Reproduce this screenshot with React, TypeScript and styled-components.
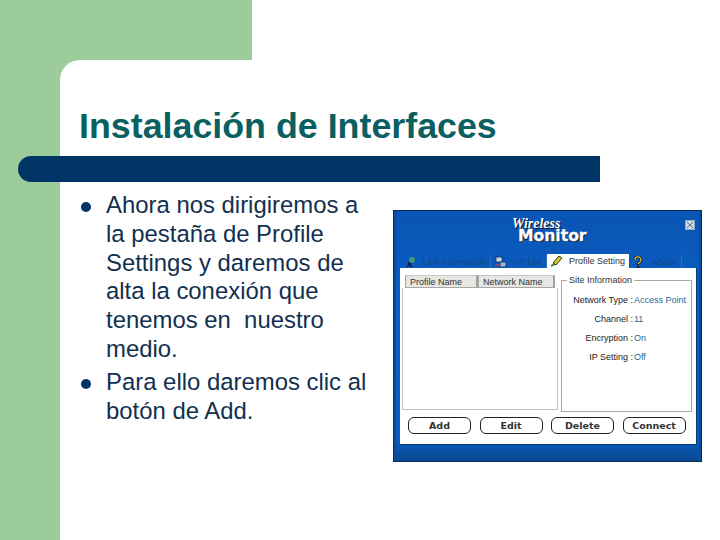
import React from "react";
import styled, { createGlobalStyle } from "styled-components";

const Global = createGlobalStyle`
  html, body { margin: 0; padding: 0; background: #fff; }
  #root { width: 720px; height: 540px; overflow: hidden; }
`;

const Slide = styled.div`
  width: 720px;
  height: 540px;
  display: flex;
  flex-direction: column;
  font-family: "Liberation Sans", Arial, sans-serif;
  background: #fff;
`;
const TopBand = styled.div`
  width: 252px;
  height: 60px;
  flex: none;
  background: #9dcc9b;
`;
const Lower = styled.div`
  flex: 1;
  background: linear-gradient(to right, #9dcc9b 252px, #fff 252px);
  display: flex;
  min-height: 0;
`;
const Content = styled.main`
  flex: 1;
  margin-left: 60px;
  background: #fff;
  border-top-left-radius: 20px;
  display: flex;
  flex-direction: column;
  min-width: 0;
`;
const Title = styled.h1`
  margin: 46px 0 0 19px;
  height: 40px;
  font-size: 35.8px;
  line-height: 40px;
  font-weight: 700;
  color: #0a6060;
  white-space: nowrap;
`;
const Rule = styled.div`
  width: 582px;
  height: 26px;
  margin: 10px 0 0 -42px;
  background: #003366;
  border-radius: 13px 0 0 13px;
`;
const Columns = styled.div`
  display: flex;
  align-items: flex-start;
`;
const Bullets = styled.ul`
  list-style: none;
  margin: 9px 0 0 19px;
  padding: 0;
  width: 295px;
  flex: none;
  display: flex;
  flex-direction: column;
  gap: 4px;
`;
const Bullet = styled.li`
  position: relative;
  padding-left: 27px;
  font-size: 23.9px;
  line-height: 28.8px;
  color: #12304f;
  &::before {
    content: "";
    position: absolute;
    left: 2px;
    top: 11px;
    width: 10px;
    height: 10px;
    border-radius: 50%;
    background: #003366;
  }
`;
const Win = styled.section`
  width: 309px;
  height: 252px;
  margin: 28px 0 0 19px;
  flex: none;
  box-sizing: border-box;
  border: 1px solid #0a2a58;
  background: linear-gradient(to bottom, #0a55b4 0, #0a5fc4 40%, #0b5cbc 92%, #0a4690 100%);
  box-shadow: inset 2px 0 0 #0a4c9c, inset -2px 0 0 #0a4c9c;
  padding: 2px 4px 0 6px;
  display: flex;
  flex-direction: column;
`;
const WinHead = styled.header`
  position: relative;
  height: 41px;
  flex: none;
  display: flex;
  flex-direction: column;
  color: #fff;
`;
const BrandTop = styled.div`
  font-family: "Liberation Serif", serif;
  font-style: italic;
  font-weight: 700;
  font-size: 14px;
  line-height: 12px;
  margin: 5px 0 0 112px;
  text-shadow: 1px 1px 0 #06122a;
`;
const BrandMain = styled.div`
  font-family: "DejaVu Sans", sans-serif;
  font-weight: 700;
  font-size: 15.6px;
  line-height: 13px;
  margin-left: 118px;
  -webkit-text-stroke: 0.3px #fff;
  text-shadow: 1px 1px 0 #06122a, 0 1px 0 #06122a;
`;
const Close = styled.div`
  position: absolute;
  right: 2px;
  top: 7px;
  width: 10px;
  height: 10px;
  box-sizing: border-box;
  background: #cfdbe6;
  border: 1px solid #8ea9c4;
  display: flex;
  align-items: center;
  justify-content: center;
`;
const TabRow = styled.nav`
  display: flex;
  align-items: flex-end;
  height: 14px;
  flex: none;
  padding-left: 1px;
`;
const Tab = styled.div<{ $active?: boolean; $w: number }>`
  width: ${(p) => p.$w}px;
  height: ${(p) => (p.$active ? 14 : 13)}px;
  box-sizing: border-box;
  flex: none;
  display: flex;
  align-items: center;
  gap: 6px;
  padding-left: 4px;
  font-size: 9px;
  white-space: nowrap;
  background: ${(p) => (p.$active ? "#fff" : "transparent")};
  color: ${(p) => (p.$active ? "#333" : "#124583")};
  border-right: ${(p) => (p.$active ? "none" : "1px solid #2f6cb8")};
`;
const Panel = styled.div`
  width: 297px;
  height: 177px;
  background: #fff;
  flex: none;
  box-sizing: border-box;
  border-right: 1px solid #0a3a78;
  border-bottom: 1px solid #0a3a78;
  padding: 0 4px 0 2px;
  display: flex;
  flex-direction: column;
`;
const PanelTop = styled.div`
  display: flex;
  height: 144px;
  box-sizing: border-box;
  padding-top: 7px;
  flex: none;
  gap: 3px;
`;
const ListBox = styled.div`
  width: 156px;
  flex: none;
  margin-bottom: 2px;
  display: flex;
  flex-direction: column;
`;
const ListHead = styled.div`
  display: flex;
  height: 13px;
  flex: none;
  margin: 0 3px;
`;
const Column = styled.div<{ $w: number }>`
  width: ${(p) => p.$w}px;
  box-sizing: border-box;
  flex: none;
  background: #e6e6e2;
  border-right: 2px solid #a0a0a0;
  border-left: 1px solid #a8a8a8;
  border-top: 1px solid #c8c8c8;
  border-bottom: 1px solid #a8a8a8;
  font-size: 9px;
  line-height: 12px;
  padding-left: 4px;
  color: #333;
  white-space: nowrap;
  overflow: hidden;
`;
const ListBody = styled.div`
  flex: 1;
  border: 1px solid #c0c0c0;
  border-top: none;
`;
const Group = styled.fieldset`
  width: 131px;
  flex: none;
  margin: 0;
  padding: 9px 0 0;
  min-width: 0;
  box-sizing: border-box;
  border: 1px solid #a8a8a8;
  display: flex;
  flex-direction: column;
  gap: 7px;
`;
const GroupTitle = styled.legend`
  font-size: 9px;
  line-height: 10px;
  margin-left: 5px;
  padding: 0 2px;
  color: #333;
`;
const Info = styled.div`
  display: grid;
  grid-template-columns: 71px 1fr;
  font-size: 9px;
  line-height: 12px;
  color: #222;
  white-space: nowrap;
`;
const InfoLabel = styled.span`
  text-align: right;
`;
const InfoValue = styled.span`
  color: #1d6a96;
  padding-left: 1px;
`;
const Buttons = styled.div`
  display: flex;
  gap: 8.5px;
  padding: 5px 0 0 6px;
`;
const Btn = styled.button`
  width: 63px;
  height: 17px;
  padding: 0;
  flex: none;
  background: #fff;
  border: 1px solid #222;
  border-radius: 6px;
  font-family: "DejaVu Sans", sans-serif;
  font-size: 9.5px;
  line-height: 15px;
  font-weight: 700;
  color: #333;
`;

const Tick = () => (
  <svg width="12" height="12" viewBox="0 0 12 12">
    <path d="M2 8 L8 1 L11 3 L5 10 Z" fill="#d8c020" stroke="#222" strokeWidth="0.9" />
    <path d="M0 11 L4 9" stroke="#2f7f2f" strokeWidth="1.6" />
  </svg>
);
const LinkIcon = () => (
  <svg width="12" height="12" viewBox="0 0 12 12">
    <circle cx="7" cy="4" r="3" fill="#3a9a7a" />
    <path d="M2 11 L6 7 M3 6 L7 11" stroke="#0c1c3a" strokeWidth="1.4" />
  </svg>
);
const ListIcon = () => (
  <svg width="12" height="12" viewBox="0 0 12 12">
    <rect x="1" y="1" width="6" height="5" fill="#c8d8e8" stroke="#12305a" strokeWidth="0.8" />
    <rect x="5" y="6" width="6" height="5" fill="#9ab4d8" stroke="#12305a" strokeWidth="0.8" />
    <path d="M1 9 H5" stroke="#d84030" strokeWidth="1.2" />
  </svg>
);
const HelpIcon = () => (
  <svg width="13" height="12" viewBox="0 0 13 12">
    <path d="M2 4 a3 3 0 1 1 4.5 2.4 L5 8 V9" fill="none" stroke="#1a1a1a" strokeWidth="2.6" />
    <path d="M2 4 a3 3 0 1 1 4.5 2.4 L5 8" fill="none" stroke="#e8d040" strokeWidth="1.1" />
    <rect x="4" y="10" width="2" height="2" fill="#1a1a1a" />
  </svg>
);
const CloseGlyph = () => (
  <svg width="8" height="8" viewBox="0 0 8 8">
    <path d="M1 1 L7 7 M7 1 L1 7" stroke="#5a6e86" strokeWidth="1" />
  </svg>
);

const info: [string, string][] = [
  ["Network Type :", "Access Point"],
  ["Channel :", "11"],
  ["Encryption :", "On"],
  ["IP Setting :", "Off"],
];

const firstBullet =
  "Ahora nos dirigiremos a la pestaña de Profile Settings y daremos de alta la conexión que tenemos en \u00a0nuestro medio.";

export default function App() {
  return (
    <Slide>
      <Global />
      <TopBand />
      <Lower>
        <Content>
          <Title>Instalación de Interfaces</Title>
          <Rule />
          <Columns>
            <Bullets>
              <Bullet>{firstBullet}</Bullet>
              <Bullet>Para ello daremos clic al botón de Add.</Bullet>
            </Bullets>
            <Win>
              <WinHead>
                <BrandTop>Wireless</BrandTop>
                <BrandMain>Monitor</BrandMain>
                <Close><CloseGlyph /></Close>
              </WinHead>
              <TabRow>
                <Tab $w={90}><LinkIcon />Link Information</Tab>
                <Tab $w={56}><ListIcon />AP List</Tab>
                <Tab $active $w={82}><Tick />Profile Setting</Tab>
                <Tab $w={53}><HelpIcon />About</Tab>
              </TabRow>
              <Panel>
                <PanelTop>
                  <ListBox>
                    <ListHead>
                      <Column $w={73}>Profile Name</Column>
                      <Column $w={77}>Network Name</Column>
                    </ListHead>
                    <ListBody />
                  </ListBox>
                  <Group>
                    <GroupTitle>Site Information</GroupTitle>
                    {info.map(([k, v]) => (
                      <Info key={k}>
                        <InfoLabel>{k}</InfoLabel>
                        <InfoValue>{v}</InfoValue>
                      </Info>
                    ))}
                  </Group>
                </PanelTop>
                <Buttons>
                  <Btn>Add</Btn>
                  <Btn>Edit</Btn>
                  <Btn>Delete</Btn>
                  <Btn>Connect</Btn>
                </Buttons>
              </Panel>
            </Win>
          </Columns>
        </Content>
      </Lower>
    </Slide>
  );
}
